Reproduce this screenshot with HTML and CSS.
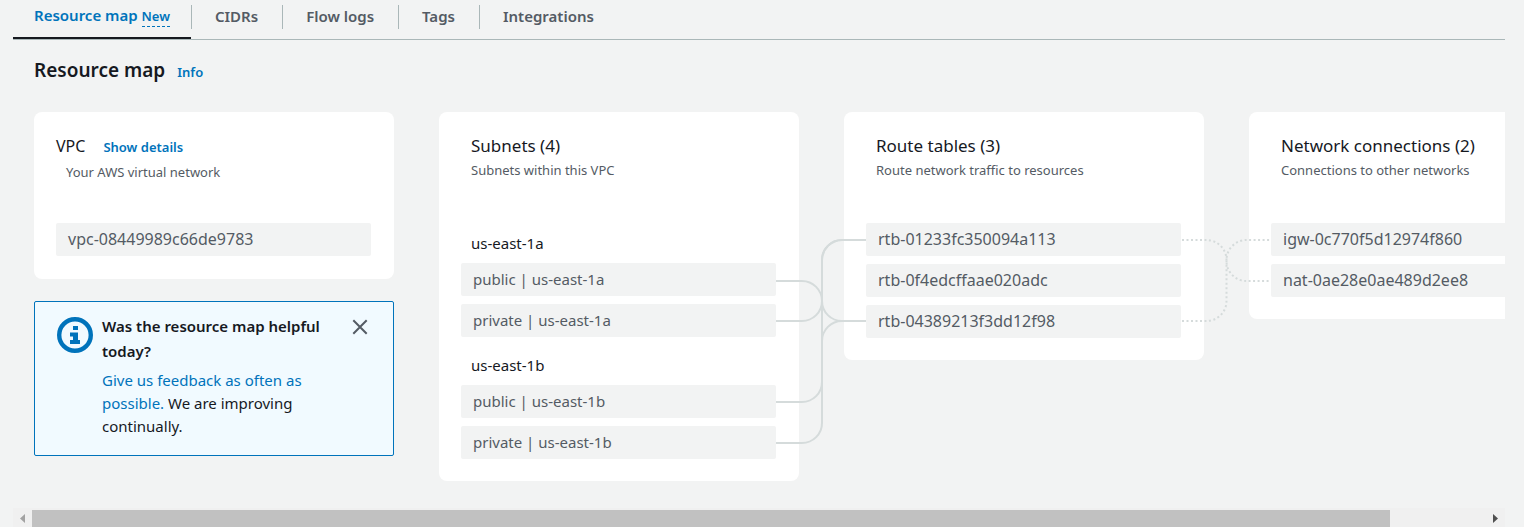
FILE: index.html
```html
<!DOCTYPE html>
<html lang="en">
<head>
<meta charset="utf-8">
<title>Resource map</title>
<link rel="stylesheet" href="styles.css">
</head>
<body>
<main class="page">
  <nav class="tabs" aria-label="VPC sections">
    <button class="tab tab-active" type="button">Resource map <span class="new">New</span></button>
    <button class="tab" type="button">CIDRs</button>
    <button class="tab" type="button">Flow logs</button>
    <button class="tab" type="button">Tags</button>
    <button class="tab" type="button">Integrations</button>
  </nav>
  <header class="heading">
    <h1>Resource map</h1>
    <a class="info" href="#info">Info</a>
  </header>
  <div class="viewport">
    <div class="map">
      <div class="column">
        <section class="card vpc-card">
          <div class="card-head vpc-head">
            <div class="vpc-title"><h2>VPC</h2><a href="#details">Show details</a></div>
            <p>Your AWS virtual network</p>
          </div>
          <ul class="items"><li class="item">vpc-08449989c66de9783</li></ul>
        </section>
        <aside class="alert">
          <svg class="alert-icon" viewBox="0 0 36 36" aria-hidden="true">
            <circle cx="18" cy="18" r="15.8" fill="none" stroke="#0073bb" stroke-width="4.4"/>
            <path fill="#0073bb" d="M16 9h5v4h-5zM13 15.500h8V23h2v4H13v-4h3v-3.500h-3z"/>
          </svg>
          <div class="alert-body">
            <h3>Was the resource map helpful today?</h3>
            <p><a href="#feedback">Give us feedback as often as possible.</a> We are improving continually.</p>
          </div>
          <button class="close" type="button" aria-label="Dismiss">
            <svg viewBox="0 0 16 16" aria-hidden="true"><path d="M1.300 1.300l13.400 13.400M14.700 1.300L1.300 14.700" fill="none" stroke="#545b64" stroke-width="2"/></svg>
          </button>
        </aside>
      </div>
      <section class="card">
        <div class="card-head"><h2>Subnets (4)</h2><p>Subnets within this VPC</p></div>
        <ul class="items">
          <li class="zone">us-east-1a</li>
          <li class="item item-named">public | us-east-1a</li>
          <li class="item item-named">private | us-east-1a</li>
          <li class="zone">us-east-1b</li>
          <li class="item item-named">public | us-east-1b</li>
          <li class="item item-named">private | us-east-1b</li>
        </ul>
      </section>
      <section class="card">
        <div class="card-head"><h2>Route tables (3)</h2><p>Route network traffic to resources</p></div>
        <ul class="items">
          <li class="item">rtb-01233fc350094a113</li>
          <li class="item">rtb-0f4edcffaae020adc</li>
          <li class="item">rtb-04389213f3dd12f98</li>
        </ul>
      </section>
      <section class="card">
        <div class="card-head"><h2>Network connections (2)</h2><p>Connections to other networks</p></div>
        <ul class="items">
          <li class="item">igw-0c770f5d12974f860</li>
          <li class="item">nat-0ae28e0ae489d2ee8</li>
        </ul>
      </section>
      <svg class="links" width="1575" height="369" viewBox="0 0 1575 369" aria-hidden="true">
        <g fill="none" stroke="#d5dbdb" stroke-width="2">
          <path d="M742 169H768A20 20 0 0 1 788 189A20 20 0 0 0 808 209H832"/>
          <path d="M742 209H768A20 20 0 0 0 788 189V148A20 20 0 0 1 808 128H832"/>
          <path d="M742 290H768A20 20 0 0 0 788 270V229A20 20 0 0 1 808 209H832"/>
          <path d="M742 331H768A20 20 0 0 0 788 311V148A20 20 0 0 1 808 128H832"/>
          <g stroke-dasharray="2 2.500">
            <path d="M1148 128H1172A20 20 0 0 1 1192.500 148A20 20 0 0 0 1213 169H1237"/>
            <path d="M1148 209H1172A20 20 0 0 0 1192.500 189V148A20 20 0 0 1 1213 128H1237"/>
          </g>
        </g>
      </svg>
    </div>
  </div>
  <div class="scrollbar">
    <button class="arrow" type="button" aria-label="Scroll left"><svg viewBox="0 0 5 9" aria-hidden="true"><path d="M5 0v9L0 4.500z" fill="#a3a3a3"/></svg></button>
    <div class="track"><div class="thumb"></div></div>
    <button class="arrow" type="button" aria-label="Scroll right"><svg viewBox="0 0 5 9" aria-hidden="true"><path d="M0 0v9l5-4.500z" fill="#505050"/></svg></button>
  </div>
</main>
</body>
</html>
```
FILE: styles.css
```css
* { box-sizing: border-box; }
body {
  margin: 0;
  overflow: hidden;
  background: #f2f3f3;
  color: #16191f;
  font: 15px/22px "Noto Sans", "Open Sans", sans-serif;
}
h1, h2, h3, p, ul { margin: 0; padding: 0; }
ul { list-style: none; }
a { color: #0073bb; text-decoration: none; }
button { border: 0; padding: 0; background: none; font: inherit; cursor: pointer; }

.page { padding: 0 19px 0 13px; }
.tabs { display: flex; height: 40px; border-bottom: 1px solid #aab7b8; }
.tab {
  position: relative;
  height: 39px;
  padding: 0 24px 8px;
  color: #545b64;
  font-size: 15px;
  font-weight: 600;
  white-space: nowrap;
}
.tab:first-child { padding: 0 21px 8px; }
.tab + .tab::before {
  content: "";
  position: absolute;
  left: 0;
  top: 5px;
  width: 1px;
  height: 24px;
  background: #aab7b8;
}
.tab-active { color: #0073bb; box-shadow: inset 0 -2px #16191f; }
.new { display: inline-block; border-bottom: 1px dashed #0073bb; font-size: 13px; line-height: 20px; }

.heading { display: flex; align-items: baseline; gap: 12px; padding: 16px 0 0 21px; height: 72px; }
h1 { font-size: 19px; font-weight: 600; line-height: 28px; }
.info { font-size: 13px; font-weight: 600; }

.viewport { overflow: hidden; padding-left: 21px; height: 396px; }
.map {
  position: relative;
  display: grid;
  grid-template-columns: repeat(4, 360px);
  gap: 45px;
  align-items: start;
  width: max-content;
}
.column { display: grid; gap: 22px; }
.card { padding: 22px 23px 22px 22px; border-radius: 8px; background: #fff; }
.vpc-card { padding-bottom: 23px; }
.card-head { height: 89px; padding-left: 10px; }
h2 { font-size: 17px; font-weight: 400; line-height: 24px; }
.card-head p { color: #545b64; font-size: 13px; line-height: 24px; }
.vpc-head { padding-left: 0; }
.card-head.vpc-head p { padding-left: 10px; line-height: 28px; }
.vpc-title { display: flex; align-items: baseline; gap: 18px; }
.vpc-title h2 { font-size: 16px; }
.vpc-title a { font-size: 13px; font-weight: 600; }
.items { display: grid; gap: 8px; }
.item { height: 33px; padding: 0 12px; border-radius: 2px; background: #f2f3f3; color: #545b64; font-size: 16px; line-height: 32px; }
.item-named { font-size: 15px; }
.zone { height: 32px; padding: 9px 10px 0; }
.links { position: absolute; left: 0; top: 0; pointer-events: none; }

.alert {
  display: grid;
  grid-template-columns: 36px 1fr 16px;
  gap: 9px;
  align-items: start;
  padding: 12px 25px 17px 22px;
  border: 1px solid #0073bb;
  border-radius: 2px;
  background: #f1faff;
}
.alert-icon { width: 36px; height: 36px; margin-top: 3px; }
h3 { margin-bottom: 5px; font-size: 15px; font-weight: 600; line-height: 25px; }
.alert p { line-height: 23px; }
.close { margin-top: 5px; height: 16px; }
.close svg { display: block; width: 16px; height: 16px; }

.scrollbar { display: flex; height: 19px; background: #f0f0f0; }
.arrow { display: grid; place-items: center; width: 19px; height: 21px; }
.arrow svg { display: block; width: 5px; height: 9px; }
.track { flex: 1; padding-top: 2px; }
.thumb { width: 93.400%; height: 17px; background: #c1c1c1; }
```
